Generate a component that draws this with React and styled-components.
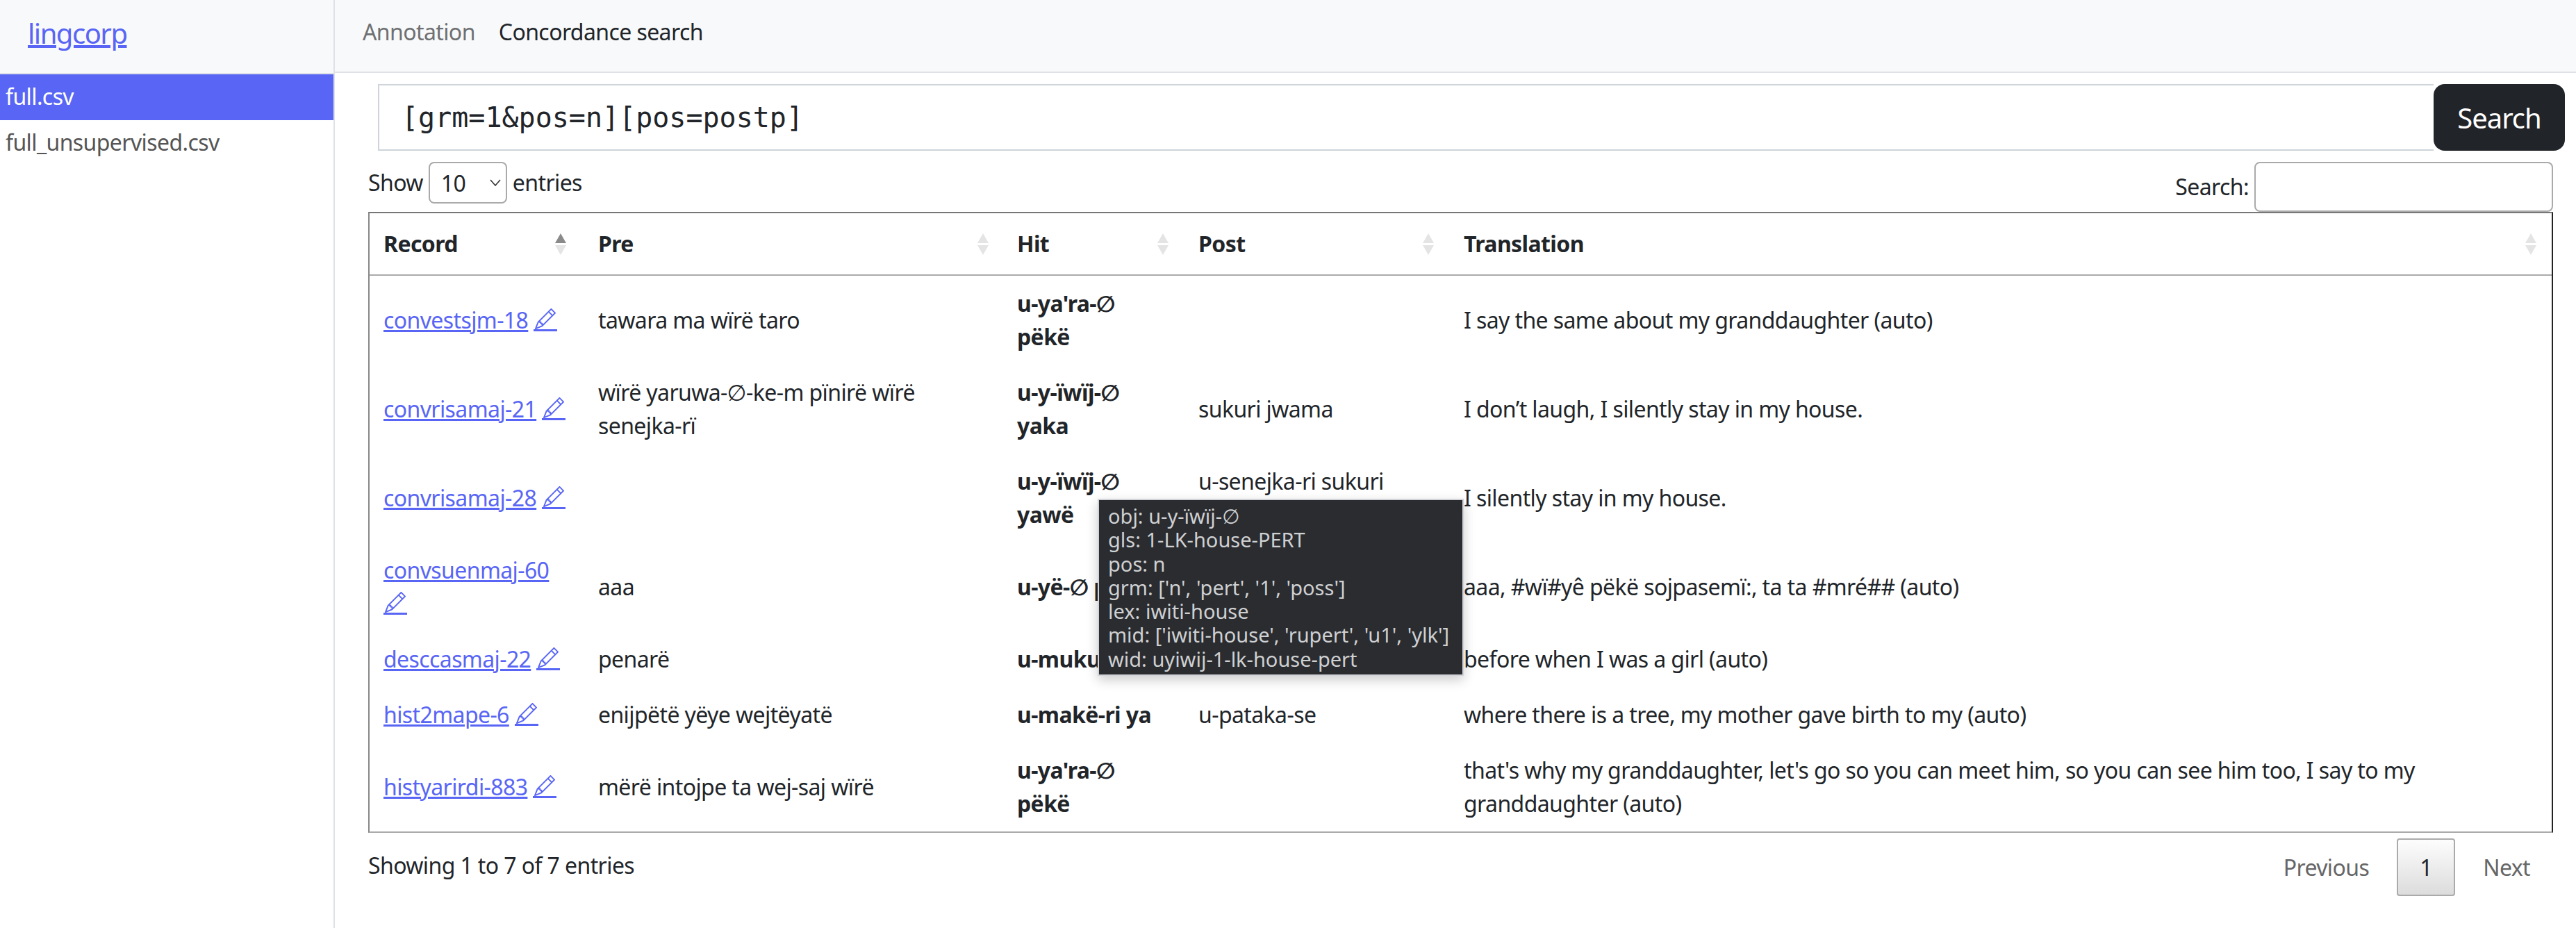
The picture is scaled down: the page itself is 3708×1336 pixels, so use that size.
import styled, { createGlobalStyle } from 'styled-components'
import { BsPencil } from 'react-icons/bs'

const FONT = `"Noto Sans", "DejaVu Sans", sans-serif`

const GlobalStyle = createGlobalStyle`
  html, body { margin: 0; padding: 0; background: #fff; }
  body {
    font-family: ${FONT};
    font-size: 32px;
    line-height: 48px;
    color: #212529;
    letter-spacing: -0.6px;
  }
  * { box-sizing: border-box; }
`

const Page = styled.div`
  display: grid;
  grid-template-columns: 482px 1fr;
  width: 3708px;
  height: 1336px;
  overflow: hidden;
`

const Sidebar = styled.aside`
  border-right: 2px solid #dee2e6;
`

const Brand = styled.div`
  height: 107px;
  padding: 18px 40px 0;
  background: #f8f9fa;
  border-bottom: 2px solid #dee2e6;
  font-size: 40px;
  line-height: 60px;
  letter-spacing: -1.5px;
  a { color: #5865f5; }
`

const FileItem = styled.div`
  height: 66px;
  padding: 8px;
  color: ${p => (p.$active ? '#fff' : '#555')};
  background: ${p => (p.$active ? '#5865f5' : 'transparent')};
`

const Main = styled.main`
  position: relative;
  min-width: 0;
`

const TopNav = styled.nav`
  display: flex;
  gap: 34px;
  height: 105px;
  padding: 22px 0 0 40px;
  background: #f8f9fa;
  border-bottom: 2px solid #dee2e6;
`

const NavLink = styled.span`
  color: ${p => (p.$active ? '#212529' : '#6e7072')};
`

const QueryForm = styled.form`
  display: flex;
  height: 96px;
  margin: 16px 16px 16px 62px;
`

const QueryInput = styled.input`
  flex: 1;
  min-width: 0;
  padding: 16px 32px;
  border: 2px solid #ced4da;
  border-right: 0;
  font-family: "DejaVu Sans Mono", monospace;
  font-size: 40px;
  letter-spacing: 0;
  color: #212529;
  outline: none;
`

const SearchButton = styled.button`
  width: 189px;
  border: 0;
  border-radius: 16px;
  background: #212529;
  color: #fff;
  font-family: ${FONT};
  font-size: 40px;
  letter-spacing: -1px;
`

const Wrapper = styled.div`
  margin: 0 33px 0 48px;
`

const Controls = styled.div`
  display: flex;
  justify-content: space-between;
  height: 72px;
`

const LengthLabel = styled.label`
  display: flex;
  align-items: center;
  gap: 8px;
  height: 60px;
`

const LengthSelect = styled.select`
  appearance: none;
  width: 113px;
  height: 60px;
  padding: 0 0 0 16px;
  border: 2px solid #aaa;
  border-radius: 8px;
  background: #fff url("data:image/svg+xml,%3Csvg xmlns='http://www.w3.org/2000/svg' viewBox='0 0 16 10'%3E%3Cpath d='M1 1l7 8 7-8' fill='none' stroke='%23333' stroke-width='1.6'/%3E%3C/svg%3E") no-repeat right 7px center / 16px 10px;
  font-family: ${FONT};
  font-size: 32px;
  letter-spacing: -0.6px;
  color: #212529;
`

const FilterLabel = styled.label`
  display: flex;
  align-items: center;
  gap: 8px;
`

const FilterInput = styled.input`
  width: 430px;
  height: 72px;
  border: 2px solid #aaa;
  border-radius: 8px;
  outline: none;
`

const Table = styled.table`
  width: 100%;
  table-layout: fixed;
  border-collapse: separate;
  border-spacing: 0;
  border-top: 2px solid #777;
  border-left: 2px solid #888;
  border-right: 2px solid #222;
  border-bottom: 2px solid #aaa;
`

const Th = styled.th`
  padding: 20px;
  text-align: left;
  font-weight: 700;
  border-bottom: 2px solid #aaa;
`

const ThInner = styled.div`
  display: flex;
  align-items: center;
  justify-content: space-between;
  margin-right: ${p => p.$arrowGap}px;
`

const Td = styled.td`
  padding: 16px 20px;
  vertical-align: middle;
  white-space: pre-line;
  font-weight: ${p => (p.$bold ? 700 : 400)};
`

const RecordLink = styled.a`
  color: #5865f5;
  text-decoration: underline;
  text-decoration-thickness: 3px;
`

const IconLink = styled.a`
  display: inline-block;
  width: 34px;
  height: 33px;
  vertical-align: -4px;
  color: #5865f5;
  border-bottom: 3px solid #5865f5;
  svg {
    display: block;
    width: 30px;
    height: 30px;
    margin-left: 2px;
  }
`

const Tooltip = styled.div`
  position: absolute;
  left: 1098px;
  top: 718px;
  width: 527px;
  height: 255px;
  padding: 6px 13px;
  background: #2a2c30;
  border: 2px solid #d3d4da;
  box-shadow: 0 6px 16px rgba(0, 0, 0, 0.2);
  color: #cfd0d2;
  font-size: 29px;
  letter-spacing: 0;
  line-height: 34.3px;
  white-space: nowrap;
  z-index: 5;
`

const Footer = styled.div`
  display: flex;
  justify-content: space-between;
  margin-top: 8px;
`

const Info = styled.div`
  margin-top: 15px;
`

const Pagination = styled.div`
  display: flex;
  align-items: center;
  margin-right: 33px;
  color: #666;
  gap: 40px;
`

const PageButton = styled.span`
  display: flex;
  align-items: center;
  justify-content: center;
  width: 84px;
  height: 83px;
  color: #212529;
  border: 2px solid #aaa;
  border-radius: 4px;
  background: linear-gradient(to bottom, #fdfdfd 0%, #dcdcdc 100%);
`

const SortIcon = ({ active }) => (
  <svg width="16" height="31" viewBox="0 0 16 31">
    <path d="M8 0l8 14H0z" fill={active ? '#8a8a8a' : '#e4e4e4'} />
    <path d="M0 17h16L8 31z" fill="#e4e4e4" />
  </svg>
)

const columns = [
  { name: 'Record', width: 309, gap: 6, active: true },
  { name: 'Pre', width: 603, gap: 1 },
  { name: 'Hit', width: 261, gap: 3 },
  { name: 'Post', width: 382, gap: 3 },
  { name: 'Translation', gap: 2 },
]

const rows = [
  ['convestsjm-18', 'tawara ma wïrë taro', "u-ya'ra-∅\npëkë", '', 'I say the same about my granddaughter (auto)'],
  ['convrisamaj-21', 'wïrë yaruwa-∅-ke-m pïnirë wïrë\nsenejka-rï', 'u-y-ïwïj-∅\nyaka', 'sukuri jwama', 'I don’t laugh, I silently stay in my house.'],
  ['convrisamaj-28', '', 'u-y-ïwïj-∅\nyawë', 'u-senejka-ri sukuri\njwama', 'I silently stay in my house.'],
  ['convsuenmaj-60', 'aaa', 'u-yë-∅ pëkë', '', 'aaa, #wï#yê pëkë sojpasemï:, ta ta #mré## (auto)'],
  ['desccasmaj-22', 'penarë', 'u-muku-ri ya', '', 'before when I was a girl (auto)'],
  ['hist2mape-6', 'enijpëtë yëye wejtëyatë', 'u-makë-ri ya', 'u-pataka-se', 'where there is a tree, my mother gave birth to my (auto)'],
  ['histyarirdi-883', 'mërë intojpe ta wej-saj wïrë', "u-ya'ra-∅\npëkë", '', "that's why my granddaughter, let's go so you can meet him, so you can see him too, I say to my\ngranddaughter (auto)"],
]

const tooltipLines = [
  'obj: u-y-ïwïj-∅',
  'gls: 1-LK-house-PERT',
  'pos: n',
  "grm: ['n', 'pert', '1', 'poss']",
  'lex: iwiti-house',
  "mid: ['iwiti-house', 'rupert', 'u1', 'ylk']",
  'wid: uyiwij-1-lk-house-pert',
]

export default function App() {
  return (
    <Page>
      <GlobalStyle />
      <Sidebar>
        <Brand><a href="#">lingcorp</a></Brand>
        <FileItem $active>full.csv</FileItem>
        <FileItem>full_unsupervised.csv</FileItem>
      </Sidebar>
      <Main>
        <TopNav>
          <NavLink>Annotation</NavLink>
          <NavLink $active>Concordance search</NavLink>
        </TopNav>
        <QueryForm onSubmit={e => e.preventDefault()}>
          <QueryInput defaultValue="[grm=1&pos=n][pos=postp]" />
          <SearchButton>Search</SearchButton>
        </QueryForm>
        <Wrapper>
          <Controls>
            <LengthLabel>
              Show
              <LengthSelect defaultValue="10">
                <option>10</option>
                <option>25</option>
                <option>50</option>
                <option>100</option>
              </LengthSelect>
              entries
            </LengthLabel>
            <FilterLabel>
              Search:
              <FilterInput />
            </FilterLabel>
          </Controls>
          <Table>
            <colgroup>
              {columns.map(c => <col key={c.name} style={c.width ? { width: c.width } : undefined} />)}
            </colgroup>
            <thead>
              <tr>
                {columns.map(c => (
                  <Th key={c.name}>
                    <ThInner $arrowGap={c.gap}>
                      {c.name}
                      <SortIcon active={c.active} />
                    </ThInner>
                  </Th>
                ))}
              </tr>
            </thead>
            <tbody>
              {rows.map(r => (
                <tr key={r[0]}>
                  <Td>
                    <RecordLink href="#">{r[0]}</RecordLink> <IconLink href="#"><BsPencil /></IconLink>
                  </Td>
                  <Td>{r[1]}</Td>
                  <Td $bold>{r[2]}</Td>
                  <Td>{r[3]}</Td>
                  <Td>{r[4]}</Td>
                </tr>
              ))}
            </tbody>
          </Table>
          <Footer>
            <Info>Showing 1 to 7 of 7 entries</Info>
            <Pagination>
              <span>Previous</span>
              <PageButton>1</PageButton>
              <span>Next</span>
            </Pagination>
          </Footer>
        </Wrapper>
        <Tooltip>
          {tooltipLines.map(line => <div key={line}>{line}</div>)}
        </Tooltip>
      </Main>
    </Page>
  )
}
